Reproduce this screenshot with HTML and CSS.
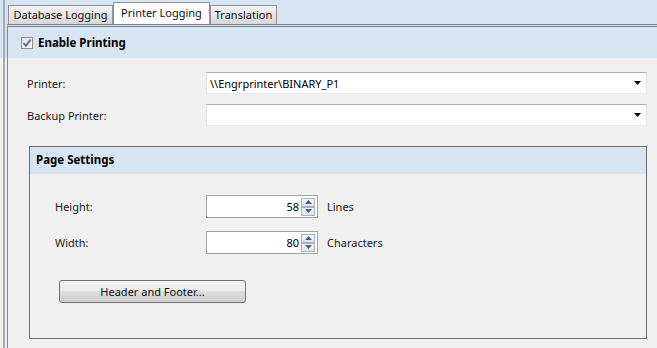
FILE: index.html
```html
<!DOCTYPE html>
<html lang="en">

<head>
    <meta charset="UTF-8">
    <meta name="viewport" content="width=device-width, initial-scale=1.0">
    <title>Printer Logging</title>
    <link rel="stylesheet" href="styles.css">
</head>

<body>
    <div class="window">
        <!-- Tab strip -->
        <div class="tabs">
            <div class="tab tab-db">Database Logging</div>
            <div class="tab tab-active">Printer Logging</div>
            <div class="tab tab-tr">Translation</div>
        </div>

        <div class="page">
            <div class="enable">
                <span class="check">
                    <svg width="10" height="10" viewBox="0 0 10 10">
                        <path d="M1.5 5.2 L4 7.8 L8.6 1.6" fill="none" stroke="#5a6aa0" stroke-width="1.8" />
                    </svg>
                </span>
                <span class="enable-label">Enable Printing</span>
            </div>

            <div class="fields">
                <div class="field-row">
                    <label class="field-label">Printer:</label>
                    <div class="combo">
                        <span class="combo-value">\\Engrprinter\BINARY_P1</span>
                        <svg class="combo-arrow" width="7" height="4" viewBox="0 0 7 4">
                            <polygon points="0,0 7,0 3.5,4" fill="#000" />
                        </svg>
                    </div>
                </div>
                <div class="field-row">
                    <label class="field-label">Backup Printer:</label>
                    <div class="combo">
                        <span class="combo-value"></span>
                        <svg class="combo-arrow" width="7" height="4" viewBox="0 0 7 4">
                            <polygon points="0,0 7,0 3.5,4" fill="#000" />
                        </svg>
                    </div>
                </div>
            </div>

            <!-- Page Settings group -->
            <div class="group">
                <div class="group-title">Page Settings</div>
                <div class="group-body">
                    <div class="spin-row">
                        <label class="spin-label">Height:</label>
                        <div class="spin">
                            <span class="spin-value">58</span>
                            <div class="spin-buttons">
                                <span class="spin-btn">
                                    <svg width="7" height="4" viewBox="0 0 7 4"><polygon points="0,4 7,4 3.5,0" fill="#4d5e80" /></svg>
                                </span>
                                <span class="spin-btn">
                                    <svg width="7" height="4" viewBox="0 0 7 4"><polygon points="0,0 7,0 3.5,4" fill="#4d5e80" /></svg>
                                </span>
                            </div>
                        </div>
                        <span class="unit">Lines</span>
                    </div>
                    <div class="spin-row">
                        <label class="spin-label">Width:</label>
                        <div class="spin">
                            <span class="spin-value">80</span>
                            <div class="spin-buttons">
                                <span class="spin-btn">
                                    <svg width="7" height="4" viewBox="0 0 7 4"><polygon points="0,4 7,4 3.5,0" fill="#4d5e80" /></svg>
                                </span>
                                <span class="spin-btn">
                                    <svg width="7" height="4" viewBox="0 0 7 4"><polygon points="0,0 7,0 3.5,4" fill="#4d5e80" /></svg>
                                </span>
                            </div>
                        </div>
                        <span class="unit">Characters</span>
                    </div>
                    <button class="hf-button">Header and Footer...</button>
                </div>
            </div>
        </div>
    </div>
</body>

</html>
```

FILE: styles.css
```css
body {
    margin: 0;
    height: 348px;
    overflow: hidden;
    font-family: "Noto Sans", "Open Sans", sans-serif;
    font-size: 11px;
    color: #1a1a1a;
    /* light blue strip behind tabs and the checkbox header */
    background: linear-gradient(#d7e4f2 0, #d7e4f2 58px, #f0f0f0 58px);
}

.window {
    margin-left: 3px;
    padding-left: 2px;
    height: 348px;
    border-left: 2px solid #a8a7be;
}

/* Tabs */
.tabs {
    display: flex;
    align-items: flex-end;
    height: 24px;
    padding-left: 1px;
}

.tab {
    box-sizing: border-box;
    height: 19px;
    line-height: 17px;
    text-align: center;
    border: 1px solid #8d9096;
    border-bottom: none;
    background: linear-gradient(#f4f4f4, #e2e2e2 60%, #d6d6d6);
    color: #111;
    white-space: nowrap;
}

.tab-db {
    width: 105px;
}

.tab-tr {
    width: 67px;
}

.tab-active {
    width: 97px;
    height: 22px;
    line-height: 19px;
    background: #fff;
    border-color: #8d9096;
}

.page {
    border-top: 3px double #7d8087;
    border-left: 1px solid #868990;
    height: 321px;
}

/* Enable printing header */
.enable {
    display: flex;
    align-items: center;
    height: 31px;
    padding-left: 13px;
}

.check {
    box-sizing: border-box;
    width: 12px;
    height: 12px;
    border: 1px solid #8f8f8f;
    background: linear-gradient(135deg, #dedede, #fbfbfb);
    display: flex;
    align-items: center;
    justify-content: center;
    margin-right: 5px;
}

.enable-label {
    font-weight: bold;
    font-size: 11.5px;
    color: #000;
}

/* Printer fields */
.fields {
    display: flex;
    flex-direction: column;
    gap: 10px;
    padding: 14px 10px 0 19px;
    background-color: #f0f0f0;
}

.field-row {
    display: flex;
    align-items: center;
}

.field-label {
    width: 179px;
}

.combo {
    flex: 1;
    box-sizing: border-box;
    height: 22px;
    display: flex;
    align-items: center;
    padding: 0 5px 0 3px;
    background-color: #fff;
    border: 1px solid #dfe3e9;
    border-top-color: #abadb3;
    border-bottom-color: #e3e9ef;
}

.combo-value {
    flex: 1;
    color: #000;
}

.combo-arrow {
    display: block;
}

/* Page settings group */
.group {
    box-sizing: border-box;
    height: 193px;
    margin: 20px 10px 0 21px;
    border: 1px solid #6e6e6e;
}

.group-title {
    height: 27px;
    line-height: 26px;
    padding-left: 6px;
    background-color: #d7e4f2;
    font-weight: bold;
    font-size: 11.5px;
    color: #000;
}

.group-body {
    display: flex;
    flex-direction: column;
    align-items: flex-start;
    gap: 13px;
    padding: 21px 0 0 25px;
}

.spin-row {
    display: flex;
    align-items: center;
}

.spin-label {
    width: 151px;
}

.spin {
    box-sizing: border-box;
    width: 112px;
    height: 23px;
    display: flex;
    align-items: center;
    padding: 0 2px 0 4px;
    background-color: #fff;
    border: 1px solid #a3a3a3;
}

.spin-value {
    flex: 1;
    text-align: right;
    padding-right: 2px;
    color: #000;
}

.spin-buttons {
    display: flex;
    flex-direction: column;
}

.spin-btn {
    box-sizing: border-box;
    width: 14px;
    height: 9px;
    display: flex;
    align-items: center;
    justify-content: center;
    border: 1px solid #a9b1bd;
    background: linear-gradient(#f6f7f9, #dde3ea);
}

.spin-btn svg {
    display: block;
}

.unit {
    margin-left: 9px;
}

.hf-button {
    box-sizing: border-box;
    width: 187px;
    height: 23px;
    margin: 13px 0 0 4px;
    font-family: inherit;
    font-size: 11px;
    color: #111;
    border: 1px solid #707070;
    border-radius: 3px;
    background: linear-gradient(#f2f2f2 0, #ebebeb 50%, #dddddd 50%, #cfcfcf 100%);
    cursor: pointer;
}
```
